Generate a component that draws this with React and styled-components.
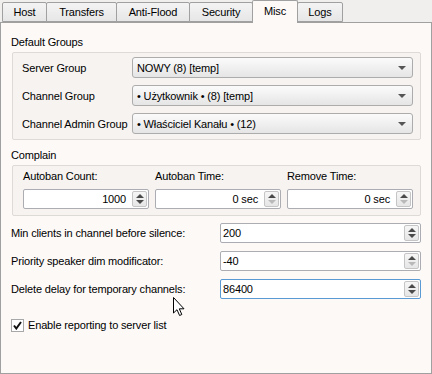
import React from "react";
import styled, { createGlobalStyle } from "styled-components";

const Global = createGlobalStyle`
    html, body {
        margin: 0;
        padding: 0;
        background: #f0efee;
    }
    body {
        font-family: "Liberation Sans", Arial, sans-serif;
        font-size: 11px;
        letter-spacing: -0.15px;
        color: #000;
    }
    * { box-sizing: border-box; }
`

const Window = styled.div`
    position: relative;
    width: 432px;
    height: 374px;
    display: flex;
    flex-direction: column;
`
const TabBar = styled.div`
    display: flex;
    align-items: flex-end;
    height: 22px;
    padding-left: 2px;
    position: relative;
    z-index: 1;
`
const Tab = styled.div`
    width: ${p => p.$w}px;
    height: ${p => (p.$active ? 23 : 20)}px;
    margin-left: -1px;
    margin-bottom: ${p => (p.$active ? -1 : 0)}px;
    display: flex;
    align-items: center;
    justify-content: center;
    padding-bottom: ${p => (p.$active ? 3 : 0)}px;
    border: 1px solid #a0a0a0;
    border-bottom: ${p => (p.$active ? "none" : "1px solid #a0a0a0")};
    border-radius: 2px 2px 0 0;
    background: ${p => (p.$active ? "#fcf9f7" : "linear-gradient(#f4f4f4, #e6e6e6)")};
    position: relative;
    z-index: ${p => (p.$active ? 2 : 0)};
    &:first-child { margin-left: 0; }
`
const Pane = styled.div`
    flex: 1;
    border: 1px solid #a0a0a0;
    background: #fcf9f7;
    padding: 11px 10px 0 10px;
    display: flex;
    flex-direction: column;
`
const Title = styled.div`
    height: 16px;
    line-height: 16px;
    margin-top: ${p => p.$top || 0}px;
    margin-bottom: 2px;
`
const Frame = styled.div`
    margin-left: 1px;
    border: 1px solid #dedad6;
    border-radius: 2px;
    background: #f6f3f0;
    padding: ${p => p.$pad};
    display: flex;
    flex-direction: column;
    gap: 7px;
`
const GroupRow = styled.div`
    display: flex;
    align-items: center;
    height: 21px;
`
const GroupLabel = styled.div`
    width: 110px;
`
const Combo = styled.div`
    flex: 1;
    height: 21px;
    border: 1px solid #acacac;
    border-radius: 3px;
    background: linear-gradient(#fbfbfb, #f0f0f0 50%, #e5e5e5);
    display: flex;
    align-items: center;
    justify-content: space-between;
    padding: 0 6px 0 4px;
`
const Arrow = styled.span`
    width: 0;
    height: 0;
    border-left: 4px solid transparent;
    border-right: 4px solid transparent;
    border-top: 4px solid #555;
`
const Grid = styled.div`
    display: grid;
    grid-template-columns: repeat(3, 1fr);
    column-gap: 6px;
    row-gap: 5px;
    padding-left: 1px;
`
const SmallLabel = styled.div`
    height: 16px;
    line-height: 16px;
`
const Spin = styled.div`
    height: 20px;
    border: 1px solid ${p => (p.$focus ? "#5a9ad4" : "#abadb3")};
    border-radius: 2px;
    background: #fff;
    display: flex;
    align-items: stretch;
`
const SpinText = styled.div`
    flex: 1;
    display: flex;
    align-items: center;
    justify-content: ${p => (p.$right ? "flex-end" : "flex-start")};
    padding: ${p => (p.$right ? "0 5px 0 0" : "0 0 0 2px")};
`
const SpinButtons = styled.div`
    width: 15px;
    margin: 1px;
    border: 1px solid #c5c5c5;
    border-radius: 2px;
    background: linear-gradient(#f6f6f6, #e6e6e6);
    display: flex;
    flex-direction: column;
    justify-content: center;
    align-items: center;
    gap: 2px;
`
const Tri = styled.span`
    width: 0;
    height: 0;
    border-left: 4px solid transparent;
    border-right: 4px solid transparent;
    ${p => (p.$up ? "border-bottom" : "border-top")}: 4px solid ${p => (p.$off ? "#b9b9b9" : "#4a4a4a")};
`
const Rows = styled.div`
    margin-top: 7px;
    display: flex;
    flex-direction: column;
    gap: 8px;
`
const FieldRow = styled.div`
    display: flex;
    align-items: center;
`
const FieldLabel = styled.div`
    width: 209px;
`
const FieldSpin = styled(Spin)`
    flex: 1;
`
const CheckRow = styled.div`
    margin-top: 18px;
    display: flex;
    align-items: center;
    gap: 4px;
    height: 16px;
`
const Box = styled.div`
    width: 13px;
    height: 13px;
    border: 1px solid #a8a8a8;
    background: #fff;
    display: flex;
    align-items: center;
    justify-content: center;
`
const Cursor = styled.svg`
    position: absolute;
    left: 173px;
    top: 297px;
    z-index: 5;
`

function SpinBox({ value, right, up = true, down = true, focus, grow }) {
    const Comp = grow ? FieldSpin : Spin;
    return (
        <Comp $focus={focus}>
            <SpinText $right={right}>{value}</SpinText>
            <SpinButtons>
                <Tri $up $off={!up} />
                <Tri $off={!down} />
            </SpinButtons>
        </Comp>
    );
}

const tabs = [
    ["Host", 45], ["Transfers", 71], ["Anti-Flood", 74],
    ["Security", 64], ["Misc", 46], ["Logs", 46],
];

export default function App() {
    return (
        <Window>
            <Global />
            <TabBar>
                {tabs.map(([t, w]) => (
                    <Tab key={t} $w={w} $active={t === "Misc"}>{t}</Tab>
                ))}
            </TabBar>
            <Pane>
                <Title>Default Groups</Title>
                <Frame $pad="4px 7px 5px 9px">
                    <GroupRow>
                        <GroupLabel>Server Group</GroupLabel>
                        <Combo>NOWY (8) [temp]<Arrow /></Combo>
                    </GroupRow>
                    <GroupRow>
                        <GroupLabel>Channel Group</GroupLabel>
                        <Combo>• Użytkownik • (8) [temp]<Arrow /></Combo>
                    </GroupRow>
                    <GroupRow>
                        <GroupLabel>Channel Admin Group</GroupLabel>
                        <Combo>• Właściciel Kanału • (12)<Arrow /></Combo>
                    </GroupRow>
                </Frame>

                <Title $top={7}>Complain</Title>
                <Frame $pad="2px 7px 6px 9px">
                    <Grid>
                        <SmallLabel>Autoban Count:</SmallLabel>
                        <SmallLabel>Autoban Time:</SmallLabel>
                        <SmallLabel>Remove Time:</SmallLabel>
                        <SpinBox value="1000" right />
                        <SpinBox value="0 sec" right down={false} />
                        <SpinBox value="0 sec" right down={false} />
                    </Grid>
                </Frame>

                <Rows>
                    <FieldRow>
                        <FieldLabel>Min clients in channel before silence:</FieldLabel>
                        <SpinBox value="200" grow />
                    </FieldRow>
                    <FieldRow>
                        <FieldLabel>Priority speaker dim modificator:</FieldLabel>
                        <SpinBox value="-40" grow down={false} />
                    </FieldRow>
                    <FieldRow>
                        <FieldLabel>Delete delay for temporary channels:</FieldLabel>
                        <SpinBox value="86400" grow focus />
                    </FieldRow>
                </Rows>

                <CheckRow>
                    <Box>
                        <svg width="9" height="9" viewBox="0 0 9 9">
                            <path d="M1 4.5 L3.3 7.5 L8 1" fill="none" stroke="#111" strokeWidth="2" />
                        </svg>
                    </Box>
                    Enable reporting to server list
                </CheckRow>
            </Pane>
            <Cursor width="13" height="20" viewBox="0 0 13 20">
                <path d="M0.5 0.5 L0.5 16 L4 12.7 L6.6 18.5 L8.8 17.5 L6.3 11.8 L11 11.8 Z"
                      fill="#fff" stroke="#000" strokeWidth="1" strokeLinejoin="round" />
            </Cursor>
        </Window>
    );
}
